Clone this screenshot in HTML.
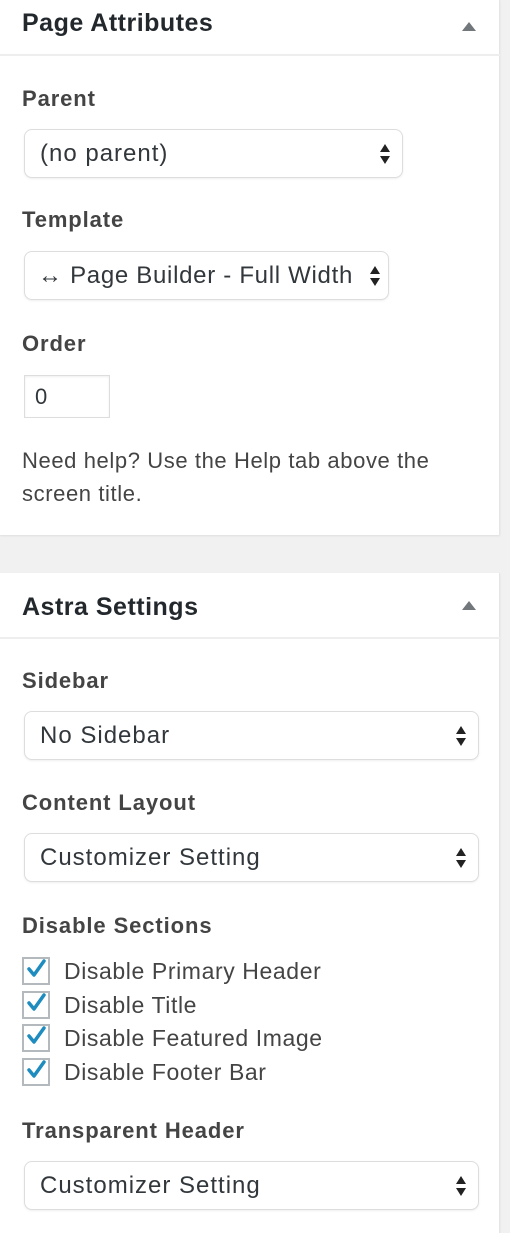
<!DOCTYPE html>
<html><head><style>
*{box-sizing:border-box;margin:0;padding:0}
body{width:510px;height:1216px;background:#f1f1f1;font-family:"Liberation Sans",sans-serif;color:#444;position:relative;overflow:hidden}
.panel{position:absolute;left:0;width:500px;background:#fff;border-right:1px solid #e5e5e5;box-shadow:0 1px 2px rgba(0,0,0,.08)}
.abs{position:absolute}
.h{position:absolute;left:22px;font-size:25px;letter-spacing:.5px;font-weight:bold;color:#23282d}
.hb{position:absolute;left:0;width:500px;height:2px;background:#eee}
.tri{position:absolute;left:462px;width:0;height:0;border-left:7px solid transparent;border-right:7px solid transparent;border-bottom:9px solid #72777c}
.lbl{position:absolute;left:22px;font-size:22px;letter-spacing:.9px;font-weight:bold;color:#444}
.sel{position:absolute;left:24px;height:49px;border:1px solid #ddd;border-radius:8px;box-shadow:0 1px 2px rgba(0,0,0,.07);font-size:24px;letter-spacing:1px;color:#32373c;padding-left:15px;line-height:47px;background:#fff;white-space:nowrap}
.arr{position:absolute;right:12px;top:14px;width:10px;height:20px}
.arr:before{content:"";position:absolute;top:0;left:0;border-left:5px solid transparent;border-right:5px solid transparent;border-bottom:8px solid #222}
.arr:after{content:"";position:absolute;bottom:0;left:0;border-left:5px solid transparent;border-right:5px solid transparent;border-top:8px solid #222}
.cb{position:absolute;left:22px;width:28px;height:28px;border:2px solid #b4b9be;background:#fff}
.ct{position:absolute;left:64px;font-size:23px;letter-spacing:.6px;color:#444}
</style></head><body>
<div class="panel" style="top:0;height:535px">
<div class="h" style="top:9px">Page Attributes</div>
<div class="tri" style="top:22px"></div>
<div class="hb" style="top:54px"></div>
<div class="lbl" style="top:86px">Parent</div>
<div class="sel" style="top:129px;width:379px">(no parent)<span class="arr"></span></div>
<div class="lbl" style="top:207px">Template</div>
<div class="sel" style="top:251px;width:365px;padding-left:13px;letter-spacing:.7px">↔ Page Builder - Full Width<span class="arr" style="right:8px;background:#fff"></span></div>
<div class="lbl" style="top:331px">Order</div>
<div class="abs" style="left:24px;top:375px;width:86px;height:43px;border:1px solid #ddd;box-shadow:inset 0 1px 2px rgba(0,0,0,.07);font-size:22px;color:#32373c;padding-left:10px;line-height:41px">0</div>
<div class="abs" style="left:22px;top:444px;width:445px;font-size:22px;letter-spacing:.6px;line-height:33px;color:#444">Need help? Use the Help tab above the screen title.</div>
</div>
<div class="panel" style="top:573px;height:660px">
<div class="h" style="top:20px">Astra Settings</div>
<div class="tri" style="top:28px"></div>
<div class="hb" style="top:64px"></div>
<div class="lbl" style="top:95px">Sidebar</div>
<div class="sel" style="top:138px;width:455px">No Sidebar<span class="arr"></span></div>
<div class="lbl" style="top:217px">Content Layout</div>
<div class="sel" style="top:260px;width:455px">Customizer Setting<span class="arr"></span></div>
<div class="lbl" style="top:340px">Disable Sections</div>
<div class="cb" style="top:384px"></div><div class="ct" style="top:385px">Disable Primary Header</div>
<div class="cb" style="top:418px"></div><div class="ct" style="top:419px">Disable Title</div>
<div class="cb" style="top:451px"></div><div class="ct" style="top:452px">Disable Featured Image</div>
<div class="cb" style="top:485px"></div><div class="ct" style="top:486px">Disable Footer Bar</div>
<div class="lbl" style="top:545px">Transparent Header</div>
<div class="sel" style="top:588px;width:455px">Customizer Setting<span class="arr"></span></div>
</div>
<svg class="abs" style="left:0;top:0" width="60" height="1216">
<g fill="none" stroke="#1e8cbe" stroke-width="3.5" stroke-linecap="round" stroke-linejoin="round">
<path d="M29 969l5 6 10-14"/><path d="M29 1003l5 6 10-14"/><path d="M29 1036l5 6 10-14"/><path d="M29 1070l5 6 10-14"/>
</g></svg>
</body></html>
